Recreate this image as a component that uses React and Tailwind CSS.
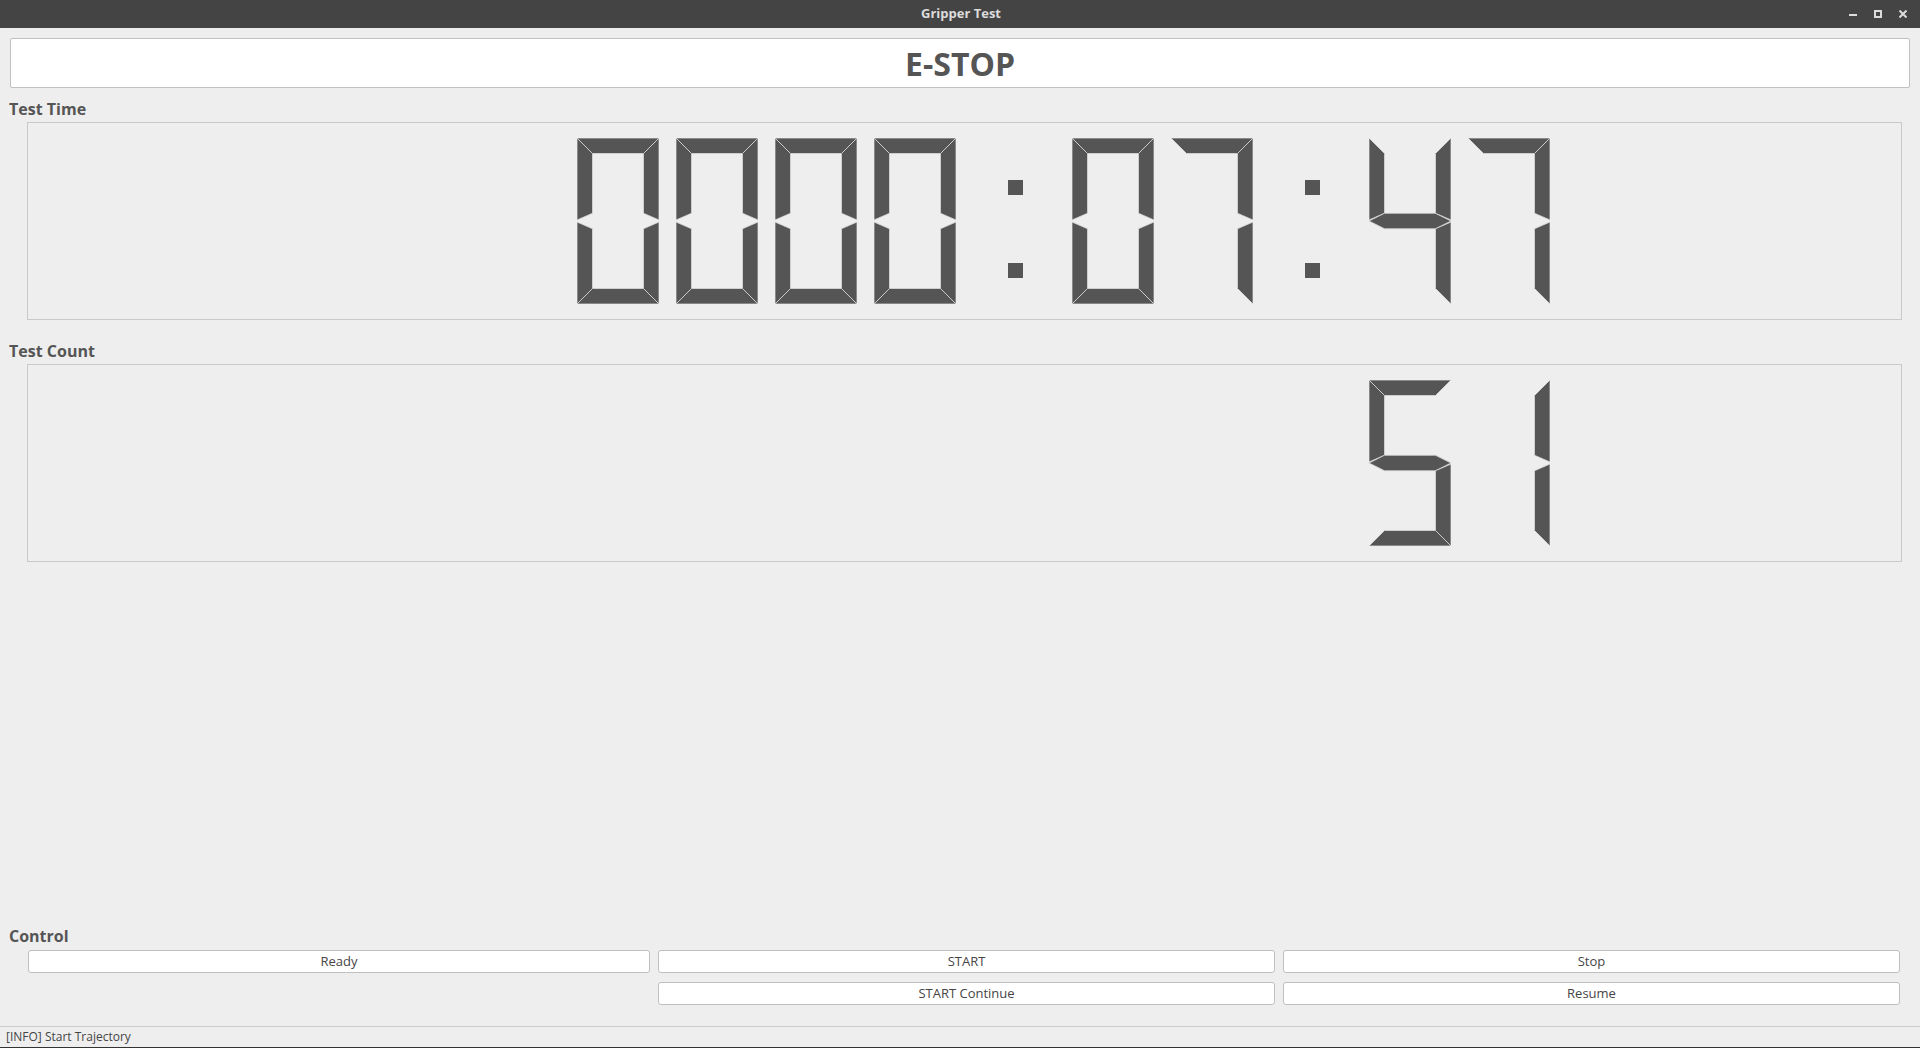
import React from "react";

// segmentos de la pantalla LCD (estilo QLCDNumber relleno)
const W = 82;
const H = 166;
const T = 15.5;
const M = H / 2;

const SEGMENTOS = {
  a: `0,0 ${W},0 ${W - T},${T} ${T},${T}`,
  b: `${W},0 ${W},${M - 1} ${W - T},${M - T / 2} ${W - T},${T}`,
  c: `${W},${M + 1} ${W},${H} ${W - T},${H - T} ${W - T},${M + T / 2}`,
  d: `0,${H} ${W},${H} ${W - T},${H - T} ${T},${H - T}`,
  e: `0,${M + 1} ${T},${M + T / 2} ${T},${H - T} 0,${H}`,
  f: `0,0 ${T},${T} ${T},${M - T / 2} 0,${M - 1}`,
  g: `0,${M} ${T},${M - T / 2} ${W - T},${M - T / 2} ${W},${M} ${W - T},${M + T / 2} ${T},${M + T / 2}`,
};

const DIGITOS = {
  "0": "abcdef",
  "1": "bc",
  "2": "abged",
  "3": "abgcd",
  "4": "fgbc",
  "5": "afgcd",
  "6": "afgedc",
  "7": "abc",
  "8": "abcdefg",
  "9": "abcdfg",
  " ": "",
};

function Digito({ valor }) {
  if (valor === ":") {
    return (
      <div className="w-[99px] h-[166px] flex-none relative">
        <div className="absolute left-[35px] top-[42px] w-[15px] h-[15px] bg-[#555555]"></div>
        <div className="absolute left-[35px] top-[125px] w-[15px] h-[15px] bg-[#555555]"></div>
      </div>
    );
  }
  const segs = DIGITOS[valor] || "";
  return (
    <div className="w-[99px] h-[166px] flex-none">
      <svg width={W} height={H} viewBox={`0 0 ${W} ${H}`}>
        {segs.split("").map((s) => (
          <polygon key={s} points={SEGMENTOS[s]} fill="#555555" stroke="#d9d9d9" strokeWidth="0.8" />
        ))}
      </svg>
    </div>
  );
}

function PantallaLCD({ texto }) {
  return (
    <div className="ml-[27px] mr-[18px] h-[198px] border border-[#c9c9c9] flex items-center">
      <div className="ml-[549px] flex">
        {texto.split("").map((c, i) => (
          <Digito key={i} valor={c} />
        ))}
      </div>
    </div>
  );
}

function Boton({ children }) {
  return (
    <button className="h-[23px] bg-white border border-[#bfbfbf] rounded-[3px] text-[13px] leading-[21px] text-[#454545]">
      {children}
    </button>
  );
}

export default function App() {
  return (
    <div className="w-[1920px] h-[1048px] bg-[#eeeeee] flex flex-col overflow-hidden font-['Open_Sans',sans-serif]">
      {/* Barra de título */}
      <div className="h-[28px] bg-[#444444] grid grid-cols-[1fr_auto_1fr] items-center flex-none">
        <div></div>
        <div className="text-[13px] font-bold text-[#dcdcdc] pl-[2px]">Gripper Test</div>
        <div className="flex justify-end items-center gap-[17px] pr-[13px]">
          <svg width="8" height="8" viewBox="0 0 8 8">
            <rect x="0" y="4" width="8" height="2" fill="#dcdcdc" />
          </svg>
          <svg width="8" height="8" viewBox="0 0 8 8">
            <rect x="1" y="1" width="6" height="6" fill="none" stroke="#dcdcdc" strokeWidth="2" />
          </svg>
          <svg width="8" height="8" viewBox="0 0 8 8">
            <path d="M0.5 0.5 L7.5 7.5 M7.5 0.5 L0.5 7.5" stroke="#dcdcdc" strokeWidth="2" />
          </svg>
        </div>
      </div>

      {/* Botón de parada de emergencia */}
      <div className="mt-[10px] mx-[10px] h-[50px] bg-white border border-[#c0c0c0] rounded-[2px] flex items-center justify-center flex-none">
        <span className="text-[32px] font-bold text-[#555555] leading-none mt-[2px]">E-STOP</span>
      </div>

      {/* Tiempo de prueba */}
      <div className="mt-[10px] pl-[9px] h-[22px] text-[16px] leading-[22px] font-bold text-[#555555]">Test Time</div>
      <div className="mt-[2px]">
        <PantallaLCD texto="0000:07:47" />
      </div>

      {/* Contador de pruebas */}
      <div className="mt-[20px] pl-[9px] h-[22px] text-[16px] leading-[22px] font-bold text-[#555555]">Test Count</div>
      <div className="mt-[2px]">
        <PantallaLCD texto="        51" />
      </div>

      <div className="flex-1"></div>

      {/* Control */}
      <div className="pl-[9px] h-[22px] text-[16px] leading-[22px] font-bold text-[#555555]">Control</div>
      <div className="mt-[3px] ml-[28px] grid grid-cols-[622px_617px_617px] gap-x-[8px] gap-y-[9px]">
        <Boton>Ready</Boton>
        <Boton>START</Boton>
        <Boton>Stop</Boton>
        <div></div>
        <Boton>START Continue</Boton>
        <Boton>Resume</Boton>
      </div>

      {/* Barra de estado */}
      <div className="mt-[21px] h-[22px] border-t border-[#cccccc] border-b border-b-[#333333] flex-none">
        <div className="pl-[6px] text-[12px] leading-[20px] text-[#454545]">[INFO] Start Trajectory</div>
      </div>
    </div>
  );
}
